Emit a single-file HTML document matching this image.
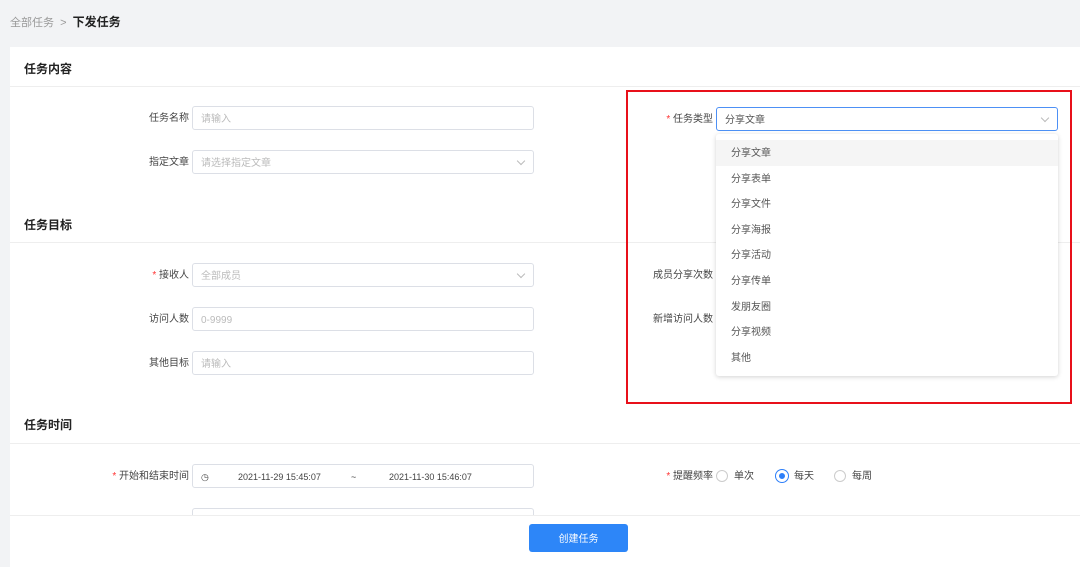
<!DOCTYPE html><html><head><meta charset="utf-8"><style>
*{box-sizing:border-box;margin:0;padding:0}
body{width:1080px;height:560px;overflow:hidden;background:#f2f3f5;font-family:"Liberation Sans","Noto Sans CJK SC",sans-serif;font-size:10px;color:#333;position:relative}
.a{position:absolute}
.card{left:10px;top:47px;width:1070px;height:520px;background:#fff}
.h{font-size:12px;font-weight:bold;color:#222;left:24px}
.ln{left:10px;width:1070px;height:1px;background:#eee}
.inp{border:1px solid #dcdfe6;border-radius:3px;height:24px;width:342px;background:#fff;color:#bbb;padding-left:8px;line-height:25px}
.lb{text-align:right;width:150px;line-height:26px;color:#444}
.req{color:#f33}
.arr{position:absolute;right:9px;top:7px;width:6px;height:6px;border-right:1px solid #bbb;border-bottom:1px solid #bbb;transform:rotate(45deg)}
.dd{left:716px;top:134px;width:342px;height:242px;background:#fff;box-shadow:0 1px 5px rgba(0,0,0,.18);border-radius:3px}
.it{height:25.6px;line-height:27px;padding-left:15px;color:#555}
.rad{display:inline-block;width:12px;height:12px;border:1px solid #ccc;border-radius:50%;vertical-align:middle;margin-right:6px}
</style></head><body>
<div class="a" style="left:10px;top:13px;font-size:11px;color:#999">全部任务 &nbsp;&gt;&nbsp; <b style="color:#222;font-size:12px">下发任务</b></div>
<div class="a card"></div>
<div class="a h" style="top:60px">任务内容</div><div class="a ln" style="top:86px"></div>
<div class="a lb" style="left:39px;top:106px">任务名称</div><div class="a inp" style="left:192px;top:106px">请输入</div>
<div class="a lb" style="left:39px;top:150px">指定文章</div><div class="a inp" style="left:192px;top:150px">请选择指定文章<span class="arr"></span></div>
<div class="a h" style="top:216px">任务目标</div><div class="a ln" style="top:242px"></div>
<div class="a lb" style="left:39px;top:263px"><span class="req">* </span>接收人</div><div class="a inp" style="left:192px;top:263px">全部成员<span class="arr"></span></div>
<div class="a lb" style="left:39px;top:307px">访问人数</div><div class="a inp" style="left:192px;top:307px">0-9999</div>
<div class="a lb" style="left:39px;top:351px">其他目标</div><div class="a inp" style="left:192px;top:351px">请输入</div>
<div class="a lb" style="left:563px;top:263px">成员分享次数</div>
<div class="a lb" style="left:563px;top:307px">新增访问人数</div>
<div class="a h" style="top:416px">任务时间</div><div class="a ln" style="top:443px"></div>
<div class="a lb" style="left:39px;top:464px"><span class="req">* </span>开始和结束时间</div>
<div class="a inp" style="left:192px;top:464px;color:#444;font-size:9px">◷<span style="position:absolute;left:45px">2021-11-29 15:45:07</span><span style="position:absolute;left:158px">~</span><span style="position:absolute;left:196px">2021-11-30 15:46:07</span></div>
<div class="a inp" style="left:192px;top:508px"></div>
<div class="a lb" style="left:563px;top:464px"><span class="req">* </span>提醒频率</div>
<div class="a" style="left:716px;top:465px;line-height:24px;color:#444"><span class="rad"></span>单次<span style="margin-left:22px"></span><span class="rad" style="border:3.5px solid #fff;background:#2d7ff9;box-shadow:0 0 0 1px #2d7ff9"></span>每天<span style="margin-left:20px"></span><span class="rad"></span>每周</div>
<div class="a" style="left:10px;top:515px;width:1070px;height:45px;background:#fff;border-top:1px solid #eee"></div>
<div class="a" style="left:529px;top:524px;width:99px;height:28px;background:#2d86f8;border-radius:3px;color:#fff;text-align:center;line-height:31px">创建任务</div>
<div class="a lb" style="left:563px;top:107px"><span class="req">* </span>任务类型</div>
<div class="a inp" style="left:716px;top:107px;border-color:#4d90f5;color:#555">分享文章<span class="arr"></span></div>
<div class="a dd"><div style="height:6px"></div>
<div class="it" style="background:#f5f5f5">分享文章</div><div class="it">分享表单</div><div class="it">分享文件</div><div class="it">分享海报</div><div class="it">分享活动</div><div class="it">分享传单</div><div class="it">发朋友圈</div><div class="it">分享视频</div><div class="it">其他</div></div>
<div class="a" style="left:626px;top:90px;width:446px;height:314px;border:2px solid #e8101a"></div>
</body></html>
